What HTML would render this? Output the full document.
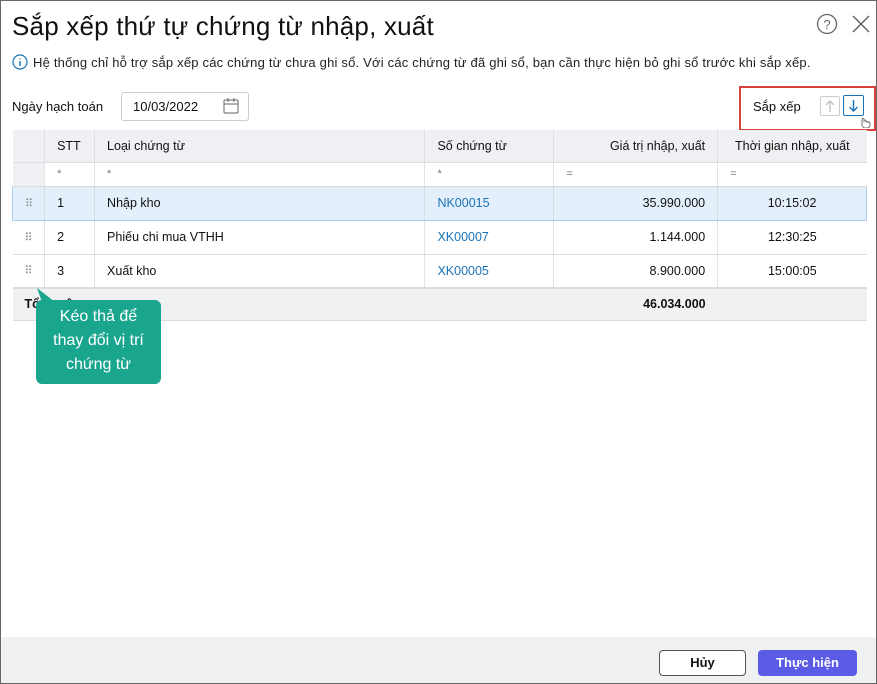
<!DOCTYPE html>
<html><head><meta charset="utf-8"><style>
*{box-sizing:border-box;margin:0;padding:0}
body{width:877px;height:684px;position:relative;background:#fff;font-family:"Liberation Sans","DejaVu Sans",sans-serif;color:#111;overflow:hidden}
.frame{position:absolute;left:0;top:0;width:877px;height:684px;border:1px solid #666;}
.a{position:absolute}
.title{left:12px;top:11px;font-size:26px;color:#111;letter-spacing:0.2px}
.info{left:12px;top:54px;font-size:13px;color:#222;letter-spacing:0.2px}
.cell{position:absolute;font-size:12.5px;white-space:nowrap}
table{border-collapse:collapse;position:absolute;left:12px;top:130px;width:855px;font-size:12.5px}
td{height:34px;padding:0 12px;border-bottom:1px solid #ddd;border-left:1px dotted #ccc}
.h td{background:#eef0f3;height:32px;border-left:1px solid #dde;}
.f td{height:24px;border-left:1px solid #e3e3e3;color:#777;font-size:11px}
.sel td{background:#e3f0fb;border-top:1px solid #a8cff0;border-bottom:1px solid #a8cff0}
.sel td:first-child{border-left:1px solid #a8cff0}
.sel td:last-child{border-right:1px solid #a8cff0}
.t td{background:#f0f1f3;height:32px;font-weight:bold;border-left:none;border-top:2px solid #ddd}
.r{text-align:right}.c{text-align:center}
.lnk{color:#1a73b8}
.dots{color:#888;font-size:11px;letter-spacing:-1px}
</style></head><body>
<div class="frame"></div>
<div class="a title">Sắp xếp thứ tự chứng từ nhập, xuất</div>
<svg class="a" style="left:816px;top:13px" width="22" height="22"><circle cx="11" cy="11" r="9.5" fill="none" stroke="#666" stroke-width="1.3"/><text x="11" y="16" font-size="13" text-anchor="middle" fill="#666" font-family="Liberation Sans">?</text></svg>
<svg class="a" style="left:851px;top:14px" width="20" height="20"><path d="M2 2L18 18M18 2L2 18" stroke="#666" stroke-width="1.5"/></svg>
<svg class="a" style="left:12px;top:54px" width="16" height="16"><circle cx="8" cy="8" r="7" fill="none" stroke="#1a73b8" stroke-width="1.2"/><path d="M8 7v5M8 4.5v1" stroke="#1a73b8" stroke-width="1.4"/></svg>
<div class="a info" style="left:33px;top:55px">Hệ thống chỉ hỗ trợ sắp xếp các chứng từ chưa ghi sổ. Với các chứng từ đã ghi sổ, bạn cần thực hiện bỏ ghi sổ trước khi sắp xếp.</div>
<div class="cell" style="left:12px;top:99px;font-size:13px">Ngày hạch toán</div>
<div class="a" style="left:121px;top:92px;width:128px;height:29px;border:1px solid #ccc;border-radius:3px"></div>
<div class="cell" style="left:133px;top:99px;font-size:13px">10/03/2022</div>
<svg class="a" style="left:222px;top:97px" width="18" height="18"><rect x="2" y="3" width="14" height="13" rx="1" fill="none" stroke="#666"/><path d="M2 7h14M6 1v4M12 1v4" stroke="#666"/></svg>
<div class="a" style="left:739px;top:86px;width:137px;height:45px;border:2px solid #d9413c"></div>
<div class="cell" style="left:753px;top:99px;font-size:13px">Sắp xếp</div>
<div class="a" style="left:820px;top:96px;width:20px;height:20px;border:1px solid #ccc;border-radius:2px"></div>
<svg class="a" style="left:820px;top:96px" width="20" height="20"><path d="M10 5v11M6 9l4-4 4 4" fill="none" stroke="#bbb" stroke-width="1.2"/></svg>
<div class="a" style="left:843px;top:95px;width:21px;height:21px;border:1px solid #1a73b8;border-radius:2px"></div>
<svg class="a" style="left:843px;top:95px" width="21" height="21"><path d="M10.5 5v11M6.5 12l4 4 4-4" fill="none" stroke="#1a73b8" stroke-width="1.4"/></svg>
<svg class="a" style="left:858px;top:114px" width="14" height="14"><path d="M4 12V5.5a1 1 0 012 0V8M6 8V7a1 1 0 012 0v1.5M8 8.5a1 1 0 012 0V9a1 1 0 012 0v2c0 2-1 3-3 3H7c-1 0-2-1-3-2" fill="#fff" stroke="#555" stroke-width=".8"/></svg>
<table>
<colgroup><col style="width:32px"><col style="width:50px"><col style="width:331px"><col style="width:129px"><col style="width:164px"><col style="width:149px"></colgroup>
<tr class="h"><td style="border-left:none"></td><td>STT</td><td>Loại chứng từ</td><td>Số chứng từ</td><td class="r">Giá trị nhập, xuất</td><td class="c" style="padding:0 4px">Thời gian nhập, xuất</td></tr>
<tr class="f"><td style="border-left:none;background:#eef0f3"></td><td>*</td><td>*</td><td>*</td><td>=</td><td>=</td></tr>
<tr class="sel"><td class="dots">⠿</td><td>1</td><td>Nhập kho</td><td class="lnk">NK00015</td><td class="r">35.990.000</td><td class="c">10:15:02</td></tr>
<tr><td class="dots" style="border-left:none">⠿</td><td>2</td><td>Phiếu chi mua VTHH</td><td class="lnk">XK00007</td><td class="r">1.144.000</td><td class="c">12:30:25</td></tr>
<tr><td class="dots" style="border-left:none">⠿</td><td>3</td><td>Xuất kho</td><td class="lnk">XK00005</td><td class="r">8.900.000</td><td class="c">15:00:05</td></tr>
<tr class="t"><td colspan="4">Tổng cộng</td><td class="r">46.034.000</td><td></td></tr>
</table>
<svg class="a" style="left:25px;top:286px" width="60" height="30"><path d="M12 2L30 16H50V30H22Z" fill="#1aa58f"/></svg>
<div class="a" style="left:36px;top:300px;width:125px;height:84px;background:#1aa58f;border-radius:6px;color:#fff;font-size:16px;text-align:center;line-height:24px;padding-top:5px">Kéo thả để<br>thay đổi vị trí<br>chứng từ</div>
<div class="a" style="left:1px;top:637px;width:875px;height:46px;background:#f0f1f3"></div>
<div class="a" style="left:659px;top:650px;width:87px;height:26px;border:1px solid #555;border-radius:4px;background:#fff;font-size:13px;font-weight:bold;text-align:center;line-height:24px">Hủy</div>
<div class="a" style="left:758px;top:650px;width:99px;height:26px;border-radius:4px;background:#5b5ce6;color:#fff;font-size:13px;font-weight:bold;text-align:center;line-height:26px">Thực hiện</div>
</body></html>
